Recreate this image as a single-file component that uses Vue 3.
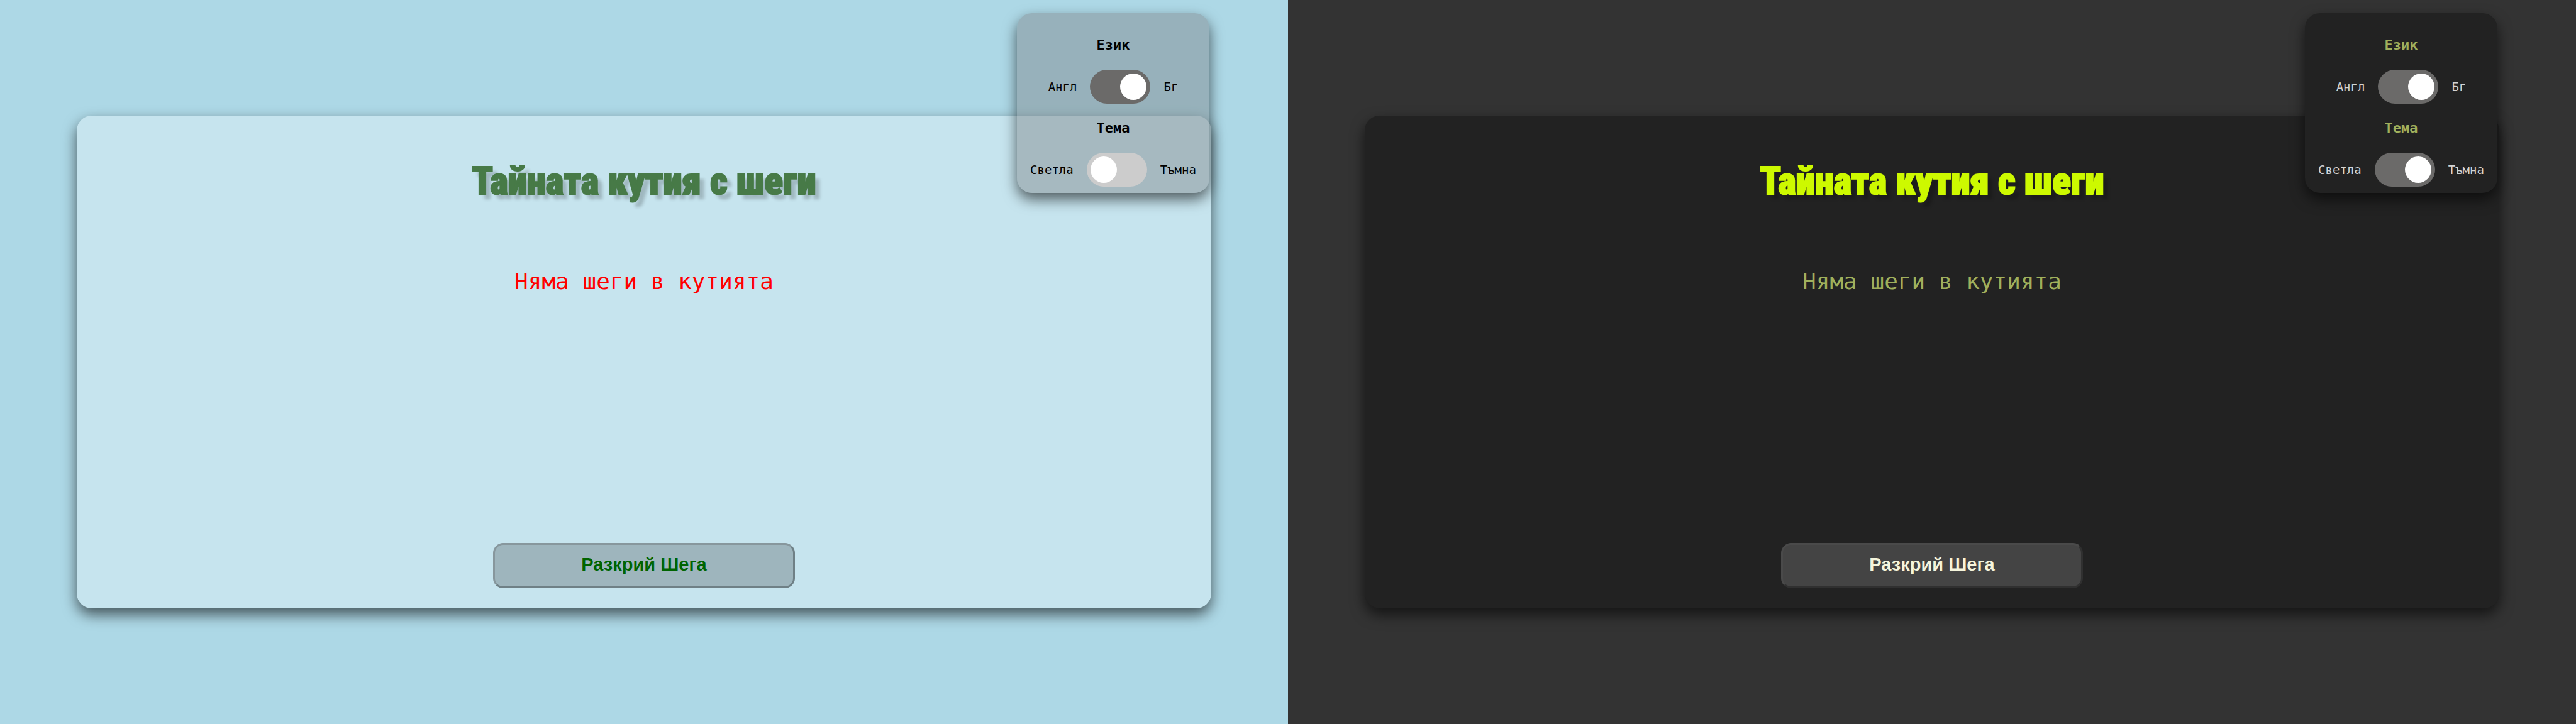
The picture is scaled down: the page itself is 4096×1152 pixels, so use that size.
<script setup>
import { reactive } from 'vue'

const screens = reactive([
  { theme: 'light', bulgarian: true, dark: false },
  { theme: 'dark', bulgarian: true, dark: true },
])
</script>

<template>
  <div class="board">
    <main v-for="s in screens" :key="s.theme" class="screen" :class="s.theme">
      <section class="box">
        <h1 class="title">Тайната кутия с шеги</h1>
        <p class="message">Няма шеги в кутията</p>
        <button type="button" class="reveal">Разкрий Шега</button>
      </section>

      <aside class="settings">
        <h2 class="heading">Език</h2>
        <div class="row">
          <label :for="s.theme + '-lang'">Англ</label>
          <input :id="s.theme + '-lang'" v-model="s.bulgarian" type="checkbox" class="switch" />
          <label :for="s.theme + '-lang'">Бг</label>
        </div>
        <h2 class="heading second">Тема</h2>
        <div class="row">
          <label :for="s.theme + '-mode'">Светла</label>
          <input :id="s.theme + '-mode'" v-model="s.dark" type="checkbox" class="switch" />
          <label :for="s.theme + '-mode'">Тъмна</label>
        </div>
      </aside>
    </main>
  </div>
</template>

<style>
body {
  margin: 0;
}
</style>

<style scoped>
.board {
  display: flex;
  min-height: 100vh;
}

.screen {
  position: relative;
  flex: 1;
  display: flex;
  flex-direction: column;
  justify-content: center;
  box-sizing: border-box;
  padding: 0 122px;
  overflow: hidden;
  background: var(--page);
  font-family: Consolas, "DejaVu Sans Mono", monospace;
}

.light {
  --page: #add8e6;
  --box: #c6e4ee;
  --panel: rgba(118, 119, 123, 0.4);
  --title: #477a47;
  --message: #ff0000;
  --heading: #000000;
  --label: #000000;
  --button: #9eb5bd;
  --button-text: #006400;
  --edge-light: #87979d;
  --edge-dark: #6f8086;
}

.dark {
  --page: #333333;
  --box: #222222;
  --panel: #222222;
  --title: #cdf900;
  --message: #a0b05c;
  --heading: #a0b05c;
  --label: #d3d3d3;
  --button: #444444;
  --button-text: #f5f5dc;
  --edge-light: #4a4a4a;
  --edge-dark: #303030;
}

.box,
.settings {
  border-radius: 24px;
  box-shadow: 0 10px 22px rgba(0, 0, 0, 0.6);
}

.box {
  display: flex;
  flex-direction: column;
  align-items: center;
  box-sizing: border-box;
  min-height: 68vh;
  padding: 64px 32px 32px;
  background: var(--box);
}

.title {
  margin: 0;
  font: 900 61px/80px Impact, "Roboto Condensed", "Open Sans Condensed", "Noto Sans ExtraCondensed", "Noto Sans Condensed", Roboto, sans-serif;
  color: var(--title);
  -webkit-text-stroke: 2px var(--title);
  text-shadow: 8px 8px 5px rgba(0, 0, 0, 0.2);
}

.message {
  margin: 96px 0 0;
  font-size: 36px;
  line-height: 48px;
  color: var(--message);
}

.reveal {
  width: 480px;
  height: 72px;
  margin-top: auto;
  padding: 0 0 3px;
  border: 3px solid;
  border-color: var(--edge-light) var(--edge-dark) var(--edge-dark) var(--edge-light);
  border-radius: 16px;
  background: var(--button);
  color: var(--button-text);
  font: 700 29px/36px "Liberation Sans", Arial, sans-serif;
}

.settings {
  position: absolute;
  top: 21px;
  right: 125px;
  box-sizing: border-box;
  width: 306px;
  padding: 36px 0 10px;
  background: var(--panel);
}

.heading {
  margin: 0 0 24px;
  font-size: 22px;
  line-height: 30px;
  text-align: center;
  color: var(--heading);
}

.second {
  margin-top: 24px;
}

.row {
  display: flex;
  align-items: center;
  justify-content: center;
  gap: 21px;
  font-size: 19px;
  line-height: 24px;
  color: var(--label);
}

.switch {
  appearance: none;
  flex: none;
  width: 96px;
  height: 54px;
  margin: 0;
  padding: 6px;
  box-sizing: border-box;
  border-radius: 27px;
  background: #cccccc;
}

.switch::before {
  content: "";
  display: block;
  width: 42px;
  height: 42px;
  border-radius: 50%;
  background: #ffffff;
}

.switch:checked {
  background: #6b6a69;
}

.switch:checked::before {
  margin-left: auto;
}
</style>
